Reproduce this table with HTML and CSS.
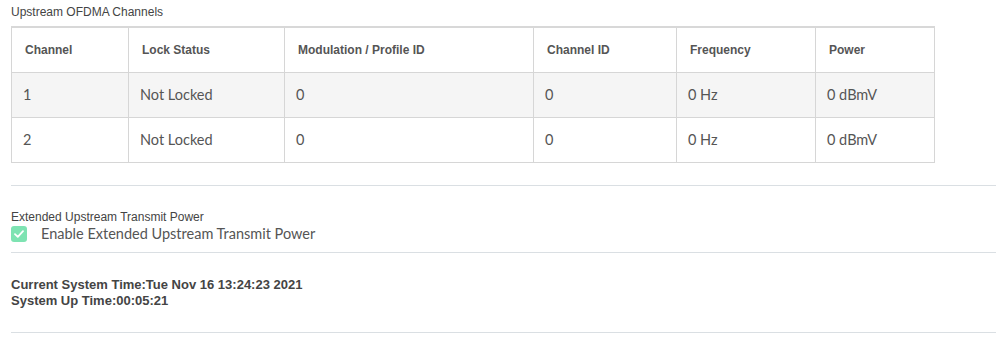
FILE: index.html
```html
<!DOCTYPE html>
<html>
<head>
<meta charset="utf-8">
<link rel="stylesheet" href="styles.css">
</head>
<body>
<div class="page">
  <div class="section-title">Upstream OFDMA Channels</div>
  <table class="grid">
    <colgroup>
      <col class="c1"><col class="c2"><col class="c3"><col class="c4"><col class="c5"><col class="c6">
    </colgroup>
    <thead>
      <tr>
        <th>Channel</th><th>Lock Status</th><th>Modulation / Profile ID</th><th>Channel ID</th><th>Frequency</th><th>Power</th>
      </tr>
    </thead>
    <tbody>
      <tr class="odd">
        <td>1</td><td>Not Locked</td><td>0</td><td>0</td><td>0 Hz</td><td>0 dBmV</td>
      </tr>
      <tr>
        <td>2</td><td>Not Locked</td><td>0</td><td>0</td><td>0 Hz</td><td>0 dBmV</td>
      </tr>
    </tbody>
  </table>
  <hr class="rule rule-first">
  <div class="option">
    <div class="option-title">Extended Upstream Transmit Power</div>
    <label class="check">
      <span class="box"><svg width="10" height="8" viewBox="0 0 10 8"><path d="M1 4.2 L3.8 6.8 L9 1.2" fill="none" stroke="#fff" stroke-width="1.8" stroke-linecap="round" stroke-linejoin="round"/></svg></span>
      <span class="check-label">Enable Extended Upstream Transmit Power</span>
    </label>
  </div>
  <hr class="rule">
  <div class="status">
    <div>Current System Time:Tue Nov 16 13:24:23 2021</div>
    <div>System Up Time:00:05:21</div>
  </div>
  <hr class="rule">
</div>
</body>
</html>
```
FILE: styles.css
```css
html, body {
  margin: 0;
  padding: 0;
  background: #fff;
}

.page {
  padding: 5px 0 0 11px;
  font-family: "Liberation Sans", Arial, sans-serif;
  color: #444;
}

.section-title {
  font-size: 12px;
  line-height: 14px;
  color: #444;
  margin-bottom: 7px;
}

.grid {
  border-collapse: collapse;
  width: 923px;
  table-layout: fixed;
  border-top: 2px solid #d8d8d8;
}

.grid col.c1 { width: 117px; }
.grid col.c2 { width: 156px; }
.grid col.c3 { width: 249px; }
.grid col.c4 { width: 143px; }
.grid col.c5 { width: 139px; }
.grid col.c6 { width: 119px; }

.grid th,
.grid td {
  border: 1px solid #d6d6d6;
  text-align: left;
  padding: 0 0 0 13px;
  height: 44px;
}

.grid th {
  font-size: 12px;
  font-weight: bold;
  color: #555;
}

.grid td {
  font-family: Lato, "Open Sans", sans-serif;
  font-size: 14.5px;
  line-height: 16px;
  color: #555;
  height: 43px;
  padding-left: 11px;
  padding-bottom: 1px;
}

.grid tr.odd td {
  background: #f5f5f5;
}

.rule {
  border: 0;
  border-top: 1px solid #dadfe3;
  margin: 0;
  height: 0;
}

.rule-first {
  margin-top: 22px;
}

.option {
  padding: 24px 0 9px;
}

.option-title {
  font-size: 12px;
  line-height: 14px;
  color: #444;
}

.check {
  display: flex;
  align-items: center;
  margin-top: 1px;
  line-height: 18px;
}

.box {
  width: 16px;
  height: 16px;
  border-radius: 3px;
  background: #7ee3b2;
  display: flex;
  align-items: center;
  justify-content: center;
}

.check-label {
  margin-left: 14px;
  font-family: Lato, "Open Sans", sans-serif;
  font-size: 14.5px;
  color: #555;
}

.status {
  padding: 24px 0 23px;
  font-size: 13px;
  font-weight: bold;
  line-height: 16px;
  color: #444;
}
```
